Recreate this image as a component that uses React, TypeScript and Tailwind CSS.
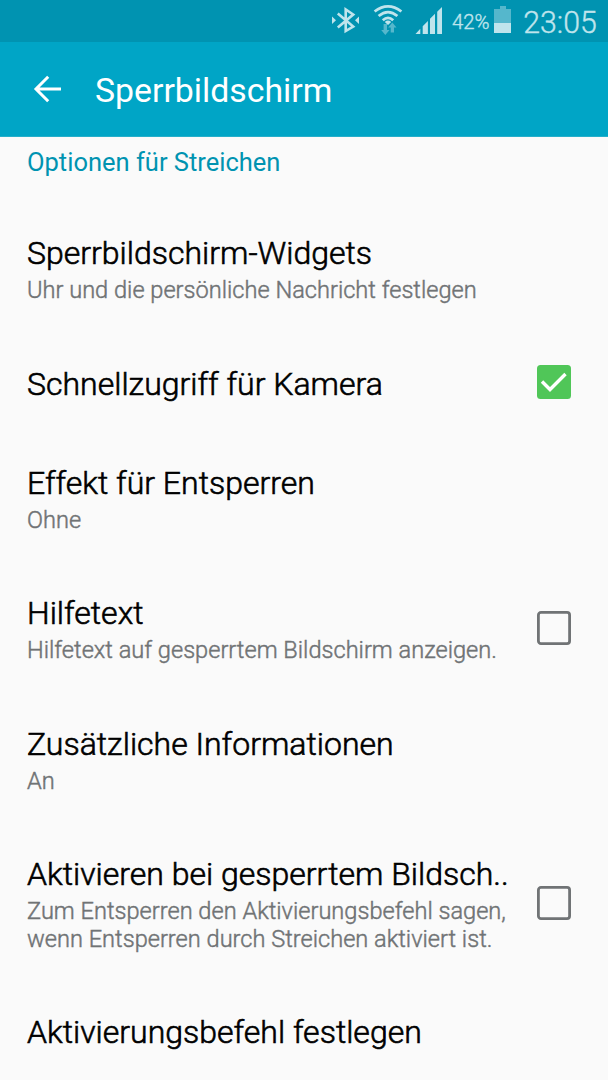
import React from "react";

type Item = { title: string; sub?: string[]; checked?: boolean; h: string };

const items: Item[] = [
  { title: "Sperrbildschirm-Widgets", sub: ["Uhr und die persönliche Nachricht festlegen"], h: "h-[130px]" },
  { title: "Schnellzugriff für Kamera", checked: true, h: "h-[99px]" },
  { title: "Effekt für Entsperren", sub: ["Ohne"], h: "h-[132px]" },
  { title: "Hilfetext", sub: ["Hilfetext auf gesperrtem Bildschirm anzeigen."], checked: false, h: "h-[129px]" },
  { title: "Zusätzliche Informationen", sub: ["An"], h: "h-[132px]" },
  {
    title: "Aktivieren bei gesperrtem Bildsch..",
    sub: ["Zum Entsperren den Aktivierungsbefehl sagen,", "wenn Entsperren durch Streichen aktiviert ist."],
    checked: false,
    h: "h-[156px]",
  },
  { title: "Aktivierungsbefehl festlegen", h: "h-[99px]" },
];

function Checkbox({ checked }: { checked: boolean }) {
  return (
    <svg className="mr-[37px] mb-[3px] h-[34px] w-[34px] shrink-0" viewBox="0 0 34 34" role="checkbox" aria-checked={checked}>
      {checked ? (
        <>
          <rect width="34" height="34" rx="3.5" fill="#50c658" />
          <path d="M5 16.5 L13 24.5 L28.5 9" fill="none" stroke="#fff" strokeWidth="3.4" />
        </>
      ) : (
        <rect x="1.4" y="1.4" width="31.2" height="31.2" rx="2.6" fill="none" stroke="#707375" strokeWidth="2.8" />
      )}
    </svg>
  );
}

function StatusBar() {
  return (
    <div className="flex h-[42px] items-start justify-end bg-[#0093b1] text-[#bfe4ec]">
      <svg className="h-[42px] w-[132px] shrink-0" viewBox="320 0 132 42" fill="none">
        <path d="M337.8 13.5 L353.2 26.5 L345.7 31 V9.5 L353.2 14.5 L337.8 27.5" stroke="#bfe4ec" strokeWidth="2.6" />
        <path d="M332 16.5 L336 20.2 L332 24 Z M359 16.5 L355 20.2 L359 24 Z" fill="#bfe4ec" />
        <g stroke="#bfe4ec" strokeWidth="2.8">
          <path d="M374.6 11.5 Q388 1.2 401.4 11.5" />
          <path d="M378.6 16 Q388 8.2 397.4 16" />
          <path d="M382.8 20.2 Q388 15.5 393.2 20.2" />
        </g>
        <path d="M384.8 22 Q388 19.2 391.2 22 L388 25 Z" fill="#bfe4ec" />
        <path d="M383.6 24 H387 V30 H389.5 L385.3 35 L381.2 30 H383.6 Z M390.7 32.5 H394 V27.5 H396.5 L392.3 22.5 L388.2 27.5 H390.7 Z" fill="#55b7cc" />
        <path d="M415.5 34 L420.3 28.8 V34 Z M422.7 34 V26.3 L427.9 21 V34 Z M430 34 V18.8 L435 13.8 V34 Z M437.2 34 V11.8 L442 7 V34 Z" fill="#bfe4ec" />
      </svg>
      <svg className="h-[42px] w-[156px] shrink-0" viewBox="452 0 156 42">
        <text x="452" y="28.7" fontSize="20" fontWeight="300" stroke="#bfe4ec" strokeWidth="0.4" textLength="37.5" lengthAdjust="spacingAndGlyphs" fontFamily="Roboto, sans-serif" fill="#bfe4ec">42%</text>
        <path d="M500 6 H506 V9 H511 V33 H494 V9 H500 Z" fill="#55b7cc" />
        <rect x="494" y="23" width="17" height="10" fill="#bfe4ec" />
        <text x="523.3" y="32.7" fontSize="31" fontWeight="300" stroke="#bfe4ec" strokeWidth="0.4" textLength="73.5" lengthAdjust="spacingAndGlyphs" fontFamily="Roboto, sans-serif" fill="#bfe4ec">23:05</text>
      </svg>
    </div>
  );
}

export default function App() {
  return (
    <div className="h-[1080px] w-[608px] overflow-hidden bg-[#fafafa] font-['Roboto',sans-serif] whitespace-nowrap">
      <StatusBar />
      <header className="flex h-[95px] items-center border-b border-[#25afca] bg-[#00a5c6] text-white">
        <svg className="ml-[33px] h-[28px] w-[29px]" viewBox="0 0 29 28" fill="none" stroke="#fff" strokeWidth="3">
          <path d="M28 14 H3 M15.2 1.8 L3 14 L15.2 26.2" />
        </svg>
        <h1 className="ml-[33px] pt-[4px] text-[33.8px] leading-[42px]">Sperrbildschirm</h1>
      </header>
      <h2 className="h-[67px] pt-[10px] pl-[27px] text-[25.5px] leading-[30px] text-[#0093b1]">Optionen für Streichen</h2>
      <ul>
        {items.map((it) => (
          <li key={it.title} className={`flex items-center justify-between pl-[27px] font-light ${it.h}`}>
            <div>
              <div className="text-[32px] leading-[38px] text-black [-webkit-text-stroke:0.6px_#000]">{it.title}</div>
              {it.sub && (
                <div className="pt-[5px] text-[23.6px] leading-[27.5px] text-[#707375] [-webkit-text-stroke:0.45px_#707375]">
                  {it.sub.map((s) => (
                    <div key={s}>{s}</div>
                  ))}
                </div>
              )}
            </div>
            {it.checked !== undefined && <Checkbox checked={it.checked} />}
          </li>
        ))}
      </ul>
    </div>
  );
}
